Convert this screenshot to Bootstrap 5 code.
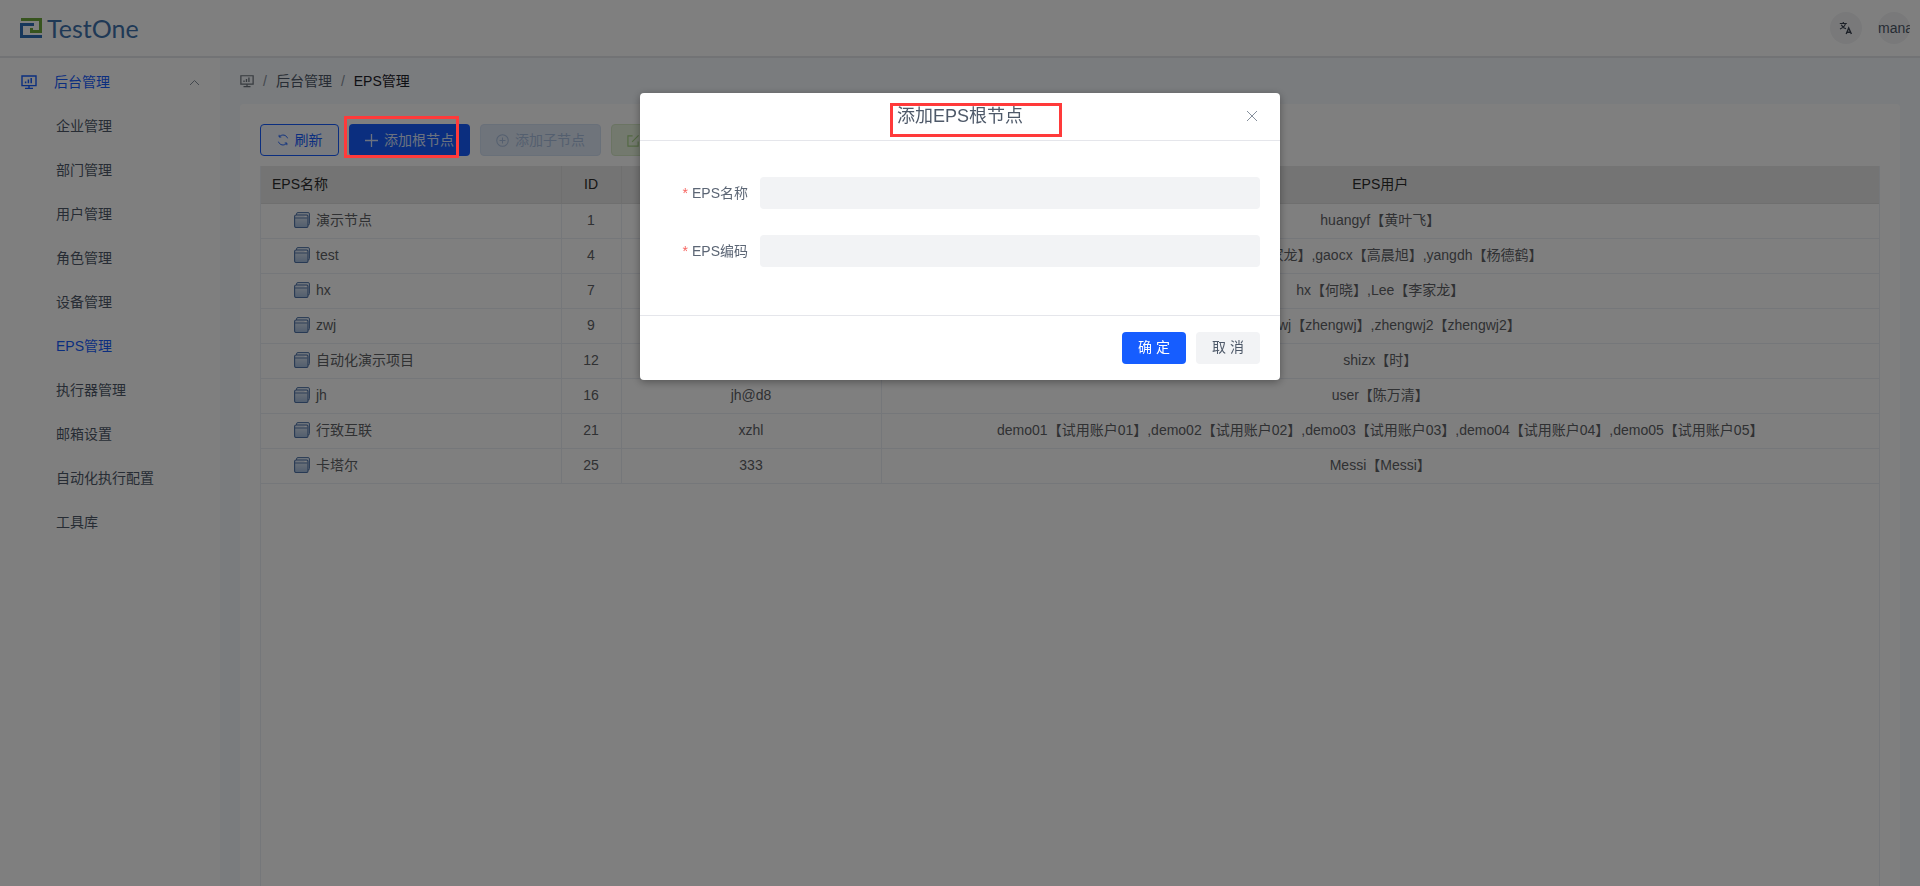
<!DOCTYPE html>
<html lang="zh-CN">
<head>
<meta charset="utf-8">
<title>EPS管理</title>
<link href="https://cdn.jsdelivr.net/npm/bootstrap@5.3.0/dist/css/bootstrap.min.css" rel="stylesheet">
<style>
html,body{height:100%;overflow:hidden}
body{font-family:"Liberation Sans","Noto Sans CJK SC",sans-serif;font-size:14px;color:#4e5969;background:#fff}
.top-bar{height:58px;border-bottom:2px solid #e5e6eb;padding:0 10px 0 20px}
.logo-text{font-family:"Lato","Noto Sans",sans-serif;font-size:25px;line-height:1;color:#3f72ad;margin-left:5px;font-weight:400}
.round-tool{width:32px;height:32px;border-radius:50%;background:#f2f3f5;color:#4e5969;overflow:hidden;white-space:nowrap;font-size:14px;flex:none}
.round-tool+.round-tool{margin-left:16px}
.app-body{height:828px}
.side-menu{width:220px;flex:none;padding-top:2px}
.menu-row{height:44px;line-height:44px;padding-left:56px;color:#4e5969}
.menu-top{padding-left:21px;padding-right:20px;color:#165dff}
.menu-top .name{margin-left:17px}
.menu-active{color:#165dff}
.main-pane{background:#f5f8fc;padding:0 20px 0 20px;min-width:0}
.crumb-row{height:46px;color:#4e5969}
.crumb-row .sep{color:#86909c;margin:0 9px}
.crumb-row .now{color:#1d2129}
.panel-box{background:#fff;border-radius:4px 4px 0 0;padding:20px 20px 0;min-height:0}
.tool-btn{height:32px;border-radius:4px;padding:0;font-size:14px;display:inline-flex;align-items:center;justify-content:center;gap:6px;border:1px solid transparent;margin-right:10px;white-space:nowrap}
.btn-refresh{width:79px;background:#f3f7ff;border-color:#165dff;color:#165dff}
.btn-root{width:121px;background:#165dff;color:#d8e4ff}
.btn-child{width:121px;background:#dfe8f6;border-color:#d3e0f3;color:#a9bfdf}
.btn-edit{width:121px;background:#e6f3dc;border-color:#d6e9c6;color:#a5cf85}
.grid-wrap{margin-top:10px;border-left:1px solid #ebeef5;border-right:1px solid #ebeef5;min-height:0}
.eps-grid{table-layout:fixed;width:100%;margin:0;--bs-table-bg:transparent;color:#606266;font-size:14px}
.eps-grid th,.eps-grid td{height:35px;padding:0;vertical-align:middle;text-align:center;border-bottom:1px solid #ebeef5;border-right:1px solid #ebeef5;font-weight:400;white-space:nowrap;overflow:hidden}
.eps-grid th{height:37px;background:#e8e8e8;color:#2c2c2c;border-color:#dedede}
.eps-grid th:first-child{text-align:left;padding-left:11px}
.eps-grid td:first-child{text-align:left;padding-left:33px}
.eps-grid th:last-child,.eps-grid td:last-child{border-right:0}
.stack-ico{width:16px;height:16px;margin-right:6px;vertical-align:-3px}
.dlg{width:640px;max-width:640px;margin:93px 0 0 640px}
.dlg .modal-content{border:0;border-radius:4px;height:287px;box-shadow:0 2px 8px rgba(0,0,0,.35)}
.dlg .modal-header{height:48px;padding:0;border-bottom:1px solid #e5e6eb;justify-content:center;position:relative}
.dlg-title{font-size:18px;font-weight:400;color:#4e5969;line-height:1;margin:0 0 2px 0;width:126px;white-space:nowrap}
.dlg-close{position:absolute;right:22px;top:17px;width:12px;height:12px;border:0;padding:0;background:none;display:flex}
.dlg .modal-body{padding:36px 20px 0 0;height:174px;flex:none}
.form-line{height:32px;margin-bottom:26px}
.form-line label{width:108px;margin-right:12px;text-align:right;flex:none;font-size:14px;color:#5c6675}
.form-line label i{font-style:normal;color:#f76560;margin-right:4px}
.form-line .form-control{height:32px;background:#f2f3f5;border:0;border-radius:4px}
.dlg .modal-footer{height:64px;padding:16px 20px;border-top:1px solid #e5e6eb;gap:10px;flex-wrap:nowrap}
.dlg-btn{width:64px;height:32px;margin:0;padding:0;border:0;border-radius:4px;font-size:14px}
.dlg-ok{background:#165dff;color:#fff}
.dlg-no{background:#f2f3f5;color:#4e5969}
.mark-box{position:fixed;border:3px solid #ff3a3a;z-index:1060;pointer-events:none}
.mark-root{left:344px;top:116px;width:115px;height:42px}
.mark-title{left:890px;top:103px;width:172px;height:34px}
</style>
</head>
<body>
<svg width="0" height="0" class="position-absolute">
<defs>
<linearGradient id="bookfill" x1="0" y1="0" x2="0" y2="1"><stop offset="0" stop-color="#e2ebf7"/><stop offset="1" stop-color="#a3bcdc"/></linearGradient>
<symbol id="stack" viewBox="0 0 16 16">
<rect x="2.500" y=".5" width="13" height="12.500" rx="1.500" fill="#dbe6f4" stroke="#5f80b0"/>
<rect x=".6" y="3" width="13.400" height="12.500" rx="1.500" fill="url(#bookfill)" stroke="#4f73a8" stroke-width="1.100"/>
<path d="M1 6h12.500" stroke="#5f80b0" stroke-width="1"/>
<path d="M10.500 4.500h2" stroke="#fff" stroke-width="1"/>
</symbol>
<symbol id="monitor" viewBox="0 0 16 16">
<path d="M1 2h14v9.600H1z" fill="none" stroke="currentColor" stroke-width="1.400"/>
<path d="M4.600 9.200V7.400M7.400 9.200V5.600M10.200 9.200V4" stroke="currentColor" stroke-width="1.500"/>
<path d="M8 11.600v2.400M4 14.400h8" stroke="currentColor" stroke-width="1.400"/>
</symbol>
</defs>
</svg>

<header class="top-bar d-flex align-items-center">
  <svg width="22" height="22" viewBox="0 0 22 22" aria-label="logo" fill="none" stroke-width="3">
    <path d="M1 2.500H20.500V14.500H11.500V11" stroke="#6fa83c"/>
    <path d="M22 19.500H1.500V7.500H14" stroke="#2f6fb6"/>
  </svg>
  <span class="logo-text">TestOne</span>
  <div class="ms-auto d-flex align-items-center">
    <div class="round-tool d-flex align-items-center justify-content-center">
      <svg width="14" height="14" viewBox="0 0 14 14" fill="none" stroke="#3a4250" stroke-width="1.200"><path d="M.8 2.500h7M4.300 1v1.500M6.500 2.500C6 5 3.500 7 1 8M2.300 3.800C3 5.600 5 7.200 7 7.800"/><path d="M7.200 13l2.500-6 2.700 6M8 11.200h3.600" stroke-width="1.400"/></svg>
    </div>
    <div class="round-tool d-flex align-items-center">manager</div>
  </div>
</header>

<div class="app-body d-flex">
  <nav class="side-menu">
    <div class="menu-row menu-top d-flex align-items-center">
      <svg width="16" height="16"><use href="#monitor"/></svg>
      <span class="name">后台管理</span>
      <svg class="ms-auto" width="11" height="7" viewBox="0 0 11 7" fill="none" stroke="#86909c" stroke-width="1"><path d="M1 6l4.500-4.500L10 6"/></svg>
    </div>
    <div class="menu-row">企业管理</div>
    <div class="menu-row">部门管理</div>
    <div class="menu-row">用户管理</div>
    <div class="menu-row">角色管理</div>
    <div class="menu-row">设备管理</div>
    <div class="menu-row menu-active">EPS管理</div>
    <div class="menu-row">执行器管理</div>
    <div class="menu-row">邮箱设置</div>
    <div class="menu-row">自动化执行配置</div>
    <div class="menu-row">工具库</div>
  </nav>

  <main class="main-pane flex-grow-1 d-flex flex-column">
    <div class="crumb-row d-flex align-items-center">
      <svg width="14" height="14" class="text-secondary"><use href="#monitor"/></svg>
      <span class="sep">/</span><span>后台管理</span><span class="sep">/</span><span class="now">EPS管理</span>
    </div>
    <section class="panel-box flex-grow-1 d-flex flex-column">
      <div class="d-flex">
        <button class="tool-btn btn-refresh" type="button">
          <svg width="12" height="12" viewBox="0 0 14 14" fill="none" stroke="currentColor" stroke-width="1.100"><path d="M12.300 5A5.500 5.500 0 0 0 3 3M1.700 9a5.500 5.500 0 0 0 9.300 2"/><path d="M2.500 1V3.500H5M11.500 13V10.500H9"/></svg>
          刷新
        </button>
        <button class="tool-btn btn-root" type="button">
          <svg width="13" height="13" viewBox="0 0 13 13" stroke="currentColor" stroke-width="1.300"><path d="M6.500 0v13M0 6.500h13"/></svg>
          添加根节点
        </button>
        <button class="tool-btn btn-child" type="button">
          <svg width="13" height="13" viewBox="0 0 14 14" fill="none" stroke="currentColor" stroke-width="1.100"><circle cx="7" cy="7" r="6.200"/><path d="M7 3.800v6.400M3.800 7h6.400"/></svg>
          添加子节点
        </button>
        <button class="tool-btn btn-edit" type="button">
          <svg width="13" height="13" viewBox="0 0 14 14" fill="none" stroke="currentColor" stroke-width="1.200"><path d="M12 8v5H1V2h5"/><path d="M5.500 8.500L12.500 1.500"/></svg>
          编辑子节点
        </button>
      </div>
      <div class="grid-wrap flex-grow-1">
        <table class="table eps-grid">
          <colgroup><col style="width:300px"><col style="width:60px"><col style="width:260px"><col></colgroup>
          <thead><tr><th>EPS名称</th><th>ID</th><th>EPS编码</th><th>EPS用户</th></tr></thead>
          <tbody>
            <tr><td><svg class="stack-ico"><use href="#stack"/></svg>演示节点</td><td>1</td><td>demo</td><td>huangyf【黄叶飞】</td></tr>
            <tr><td><svg class="stack-ico"><use href="#stack"/></svg>test</td><td>4</td><td>test</td><td>Lee【李家龙】,gaocx【高晨旭】,yangdh【杨德鹤】</td></tr>
            <tr><td><svg class="stack-ico"><use href="#stack"/></svg>hx</td><td>7</td><td>hx</td><td>hx【何晓】,Lee【李家龙】</td></tr>
            <tr><td><svg class="stack-ico"><use href="#stack"/></svg>zwj</td><td>9</td><td>zwj</td><td>zhengwj【zhengwj】,zhengwj2【zhengwj2】</td></tr>
            <tr><td><svg class="stack-ico"><use href="#stack"/></svg>自动化演示项目</td><td>12</td><td>auto</td><td>shizx【时】</td></tr>
            <tr><td><svg class="stack-ico"><use href="#stack"/></svg>jh</td><td>16</td><td>jh@d8</td><td>user【陈万清】</td></tr>
            <tr><td><svg class="stack-ico"><use href="#stack"/></svg>行致互联</td><td>21</td><td>xzhl</td><td>demo01【试用账户01】,demo02【试用账户02】,demo03【试用账户03】,demo04【试用账户04】,demo05【试用账户05】</td></tr>
            <tr><td><svg class="stack-ico"><use href="#stack"/></svg>卡塔尔</td><td>25</td><td>333</td><td>Messi【Messi】</td></tr>
          </tbody>
        </table>
      </div>
    </section>
  </main>
</div>

<div class="modal-backdrop show"></div>
<div class="modal d-block" tabindex="-1" role="dialog">
  <div class="modal-dialog dlg">
    <div class="modal-content">
      <div class="modal-header">
        <h5 class="dlg-title">添加EPS根节点</h5>
        <button class="dlg-close" type="button" aria-label="关闭"><svg width="12" height="12" viewBox="0 0 12 12" stroke="#86909c" stroke-width="1"><path d="M1 1l10 10M11 1L1 11"/></svg></button>
      </div>
      <div class="modal-body">
        <div class="form-line d-flex align-items-center"><label><i>*</i>EPS名称</label><input class="form-control" type="text"></div>
        <div class="form-line d-flex align-items-center"><label><i>*</i>EPS编码</label><input class="form-control" type="text"></div>
      </div>
      <div class="modal-footer">
        <button class="btn dlg-btn dlg-ok" type="button">确 定</button>
        <button class="btn dlg-btn dlg-no" type="button">取 消</button>
      </div>
    </div>
  </div>
</div>
<div class="mark-box mark-root"></div>
<div class="mark-box mark-title"></div>
<script src="https://cdn.jsdelivr.net/npm/bootstrap@5.3.0/dist/js/bootstrap.bundle.min.js"></script>
</body>
</html>
